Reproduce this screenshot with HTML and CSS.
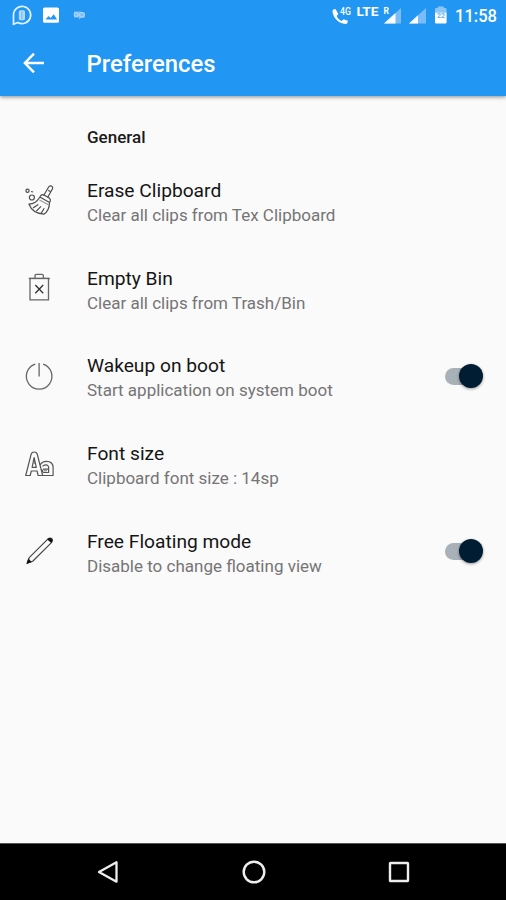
FILE: index.html
```
<!DOCTYPE html>
<html lang="en">
  <head>
    <meta charset="UTF-8" />
    <meta name="viewport" content="width=device-width, initial-scale=1.0" />
    <title>Preferences</title>
    <link rel="stylesheet" href="styles.css">
  </head>
  <body>
    <div class="screen">
      <header class="top">
        <div class="status-bar">
          <svg class="status-left" viewBox="0 0 100 30">
            <path d="M13.500 24.300V15a8.600 8.600 0 1 1 4.400 7.500z" fill="none" stroke="#e3f2ff" stroke-width="1.700" />
            <rect x="18.800" y="10.200" width="6.200" height="10" rx="1.500" fill="#b5daf9" />
            <path d="M21.900 11.500v7.500" stroke="#6db5f3" stroke-width="1" />
            <rect x="43" y="7.500" width="16" height="15.300" rx="1.600" fill="#fff" />
            <path d="M45.500 19.500l3-3.600 2.200 2.200 3-3.800 3.400 5.200z" fill="#2196f3" />
            <path d="M74 11.500h6l5 1.500v4.500l-4 .3-2 2v-2.300h-5z" fill="#80bff6" />
            <circle cx="76.200" cy="14.500" r="2" fill="none" stroke="#b7dbfa" />
            <circle cx="82" cy="14.800" r="2.400" fill="none" stroke="#b7dbfa" />
          </svg>
          <svg class="status-right" viewBox="0 0 178 30">
            <path d="M7.500 9c-2 0-3 .8-3 2.200C4.800 17.500 10.500 23.500 17.600 24c1.400 0 2.200-1 2.200-3.200l-4.200-1.600-2.100 1.900c-2.300-1.200-3.900-2.800-4.900-5l1.800-2.100z" fill="#fff" />
            <text class="tag-4g" x="12" y="14.500" textLength="11" lengthAdjust="spacingAndGlyphs">4G</text>
            <text class="tag-lte" x="28.500" y="15.600" textLength="22" lengthAdjust="spacingAndGlyphs">LTE</text>
            <text class="tag-r" x="55.500" y="13.800">R</text>
            <path d="M73 8v15.500H56z" fill="#7abcf7" />
            <path d="M67.500 13v10.500H56z" fill="#fff" />
            <path d="M98 8v15.500H81z" fill="#7abcf7" />
            <path d="M90 15.300v8.200H81z" fill="#fff" />
            <path d="M107 12.500V9.300q0-1.300 1.300-1.300h1.500V6.500h6V8h1.500q1.300 0 1.300 1.300v3.200z" fill="#8bc6f8" />
            <path d="M107 12.500h11.600v9.700q0 1.300-1.300 1.300h-9q-1.300 0-1.300-1.300z" fill="#fff" />
            <text class="tag-batt" x="109" y="18">22</text>
            <text class="clock" x="127" y="22" textLength="42" lengthAdjust="spacingAndGlyphs">11:58</text>
          </svg>
        </div>
        <div class="toolbar">
          <svg class="back" viewBox="0 0 24 24">
            <path d="M20 12H5M12 4.500L4.700 12l7.300 7.500" fill="none" stroke="#fff" stroke-width="2" />
          </svg>
          <h1>Preferences</h1>
        </div>
      </header>

      <main>
        <h2>General</h2>

        <div class="row">
          <!-- Broom -->
          <svg class="icon" viewBox="0 0 32 32">
            <g fill="none" stroke="#4c4c4c" stroke-width="1.200">
              <path d="M20.500 10.700l5.300-8.900q1.300-1.500 2.700-.7 1.600.9 1 2.600l-4.900 8.800" />
              <path d="M25.200 5.200l2.500 1.500" />
              <path d="M17.800 10.500q1.400-1.500 3.300-.5l5.100 3q1.700 1.300 1 3.200l-.7 1.300-9.600-5.500z" />
              <path d="M16.700 12.300c-2.300 4-5.600 6.700-10.700 6.900C8.200 25 13.500 28.500 20.800 29.200 25.300 26.500 26.400 22 26.500 17.700" />
              <path d="M10 22.900l5.300-3.500M13.300 26.200l4.700-4.800M18 28.500l3.200-5.300" />
              <path d="M16.500 15l9.300 5" stroke="#999" />
              <circle cx="8.900" cy="12.500" r="2.500" />
              <circle cx="4.500" cy="5.700" r="1.600" />
              <path d="M8 6.500l2.200.5" />
            </g>
          </svg>
          <div class="text">
            <div class="title">Erase Clipboard</div>
            <div class="summary">Clear all clips from Tex Clipboard</div>
          </div>
        </div>

        <div class="row">
          <!-- Bin -->
          <svg class="icon" viewBox="0 0 32 32">
            <g fill="none" stroke="#666" stroke-width="1.300">
              <path d="M7 6.300h18.500v21.500H7z" />
              <path d="M5.700 6.500h21.200" />
              <path d="M12 6V4q0-1.600 1.600-1.600h5.200q1.600 0 1.600 1.600v2" />
              <path d="M12.300 13l7.900 8.200M20.200 13l-7.900 8.200" stroke="#333" />
            </g>
          </svg>
          <div class="text">
            <div class="title">Empty Bin</div>
            <div class="summary">Clear all clips from Trash/Bin</div>
          </div>
        </div>

        <div class="row">
          <!-- Power -->
          <svg class="icon" viewBox="0 0 32 32">
            <path d="M12.200 4.100a12.800 12.800 0 1 0 7.900 0M16.100 3v13.500" fill="none" stroke="#666" stroke-width="1.300" />
          </svg>
          <div class="text">
            <div class="title">Wakeup on boot</div>
            <div class="summary">Start application on system boot</div>
          </div>
          <div class="switch"></div>
        </div>

        <div class="row">
          <!-- Outlined letters -->
          <svg class="icon" viewBox="0 0 32 32">
            <g fill="none" stroke="#555" stroke-width="1.200" stroke-linejoin="round">
              <path d="M2.700 27.500L8.200 6q.7-2 3-2t3 2l5.500 21.500h-4.600l-1-4.500H8.300l-1.100 4.500z" />
              <path d="M9.100 19.300l2-9.800 2.200 9.800z" />
              <path d="M17 17.200q2-3.800 6.500-3.800 6.600 0 6.600 6.300v7.800H18" />
              <path d="M19.500 18.200q4.800-3 6.100.7v5.600h-5q-2.300-1.500 0-3.400h5" />
              <path d="M11.200 12v4M21 22.800h3" stroke-width=".8" />
            </g>
          </svg>
          <div class="text">
            <div class="title">Font size</div>
            <div class="summary">Clipboard font size : 14sp</div>
          </div>
        </div>

        <div class="row">
          <!-- Pencil -->
          <svg class="icon" viewBox="0 0 32 32">
            <path d="M4.200 28.200l2-5.500L24.500 4.300q2.600-2.200 4.300-.6 1.500 1.700-.6 4.200L9.700 26.200z" fill="none" stroke="#444" stroke-width="1.200" stroke-linejoin="round" />
            <path d="M3.400 29l1.900-5.400 3.500 3.400zM24.300 4.500q2.600-2.300 4.300-.8 1.600 1.700-.4 4.200z" fill="#111" />
          </svg>
          <div class="text">
            <div class="title">Free Floating mode</div>
            <div class="summary">Disable to change floating view</div>
          </div>
          <div class="switch"></div>
        </div>
      </main>

      <nav class="nav-bar">
        <svg viewBox="0 0 28 28"><path d="M22.500 4.300v19.400L5 14z" fill="none" stroke="#eee" stroke-width="2.300" stroke-linejoin="round" /></svg>
        <svg viewBox="0 0 28 28"><circle cx="14" cy="14" r="10.300" fill="none" stroke="#eee" stroke-width="2.400" /></svg>
        <svg viewBox="0 0 28 28"><rect x="5" y="5" width="18" height="18" rx=".5" fill="none" stroke="#eee" stroke-width="2.400" /></svg>
      </nav>
    </div>
  </body>
</html>
```
FILE: styles.css
```
* {
  box-sizing: border-box;
  margin: 0;
  padding: 0;
}
body {
  font-family: Roboto, "Liberation Sans", sans-serif;
  background: #fafafa;
}
svg {
  display: block;
}
.screen {
  height: 900px;
  display: flex;
  flex-direction: column;
  overflow: hidden;
}
/* Status bar and toolbar */
.top {
  height: 96px;
  background: #2196f3;
  box-shadow: 0 1px 4px rgba(0, 0, 0, 0.45);
}
.status-bar {
  height: 30px;
  display: flex;
  justify-content: space-between;
}
.status-left {
  width: 100px;
  height: 30px;
}
.status-right {
  width: 178px;
  height: 30px;
}
.status-right text {
  fill: #fff;
  font-weight: 700;
}
.status-right .tag-4g {
  font-size: 10px;
  font-weight: 500;
}
.status-right .tag-lte {
  font-size: 12.5px;
}
.status-right .tag-r {
  font-size: 8.5px;
}
.status-right .tag-batt {
  font-size: 7px;
  fill: #64b2f5;
}
.status-right .clock {
  font-size: 17.5px;
  font-weight: 500;
}
.toolbar {
  height: 66px;
  display: flex;
  align-items: center;
  padding: 1px 0 0 19px;
}
.back {
  width: 30px;
  height: 30px;
  margin-top: -1px;
}
h1 {
  margin-left: 37.5px;
  font-size: 23.9px;
  font-weight: 500;
  color: #fff;
}
/* Preference list */
main {
  flex: 1;
}
h2 {
  height: 63px;
  padding: 31px 0 0 87px;
  font-size: 17px;
  line-height: 20px;
  font-weight: 500;
  color: #1a1a1a;
}
.row {
  height: 87.6px;
  display: flex;
  align-items: center;
  padding: 0 22px 0 22.5px;
}
.icon {
  width: 32px;
  height: 32px;
  margin-bottom: 4px;
}
.text {
  flex: 1;
  margin-left: 32.5px;
}
.title {
  font-size: 19.2px;
  line-height: 25px;
  color: #151515;
}
.summary {
  font-size: 17px;
  line-height: 24px;
  color: #757575;
}
.switch {
  position: relative;
  width: 40px;
  height: 25px;
  margin-bottom: 3px;
}
.switch::before {
  content: "";
  position: absolute;
  left: 1px;
  top: 4px;
  width: 34px;
  height: 17px;
  border-radius: 9px;
  background: #a8b1b7;
}
.switch::after {
  content: "";
  position: absolute;
  right: 1px;
  top: 0;
  width: 24px;
  height: 24px;
  border-radius: 50%;
  background: #001d33;
  box-shadow: 0 1px 3px rgba(0, 0, 0, 0.4);
}
/* Android navigation */
.nav-bar {
  height: 57px;
  display: flex;
  justify-content: center;
  align-items: center;
  gap: 117.5px;
  padding-left: 1px;
  background: #000;
  border-top: 1px solid #555;
}
.nav-bar svg {
  width: 28px;
  height: 28px;
}
```
